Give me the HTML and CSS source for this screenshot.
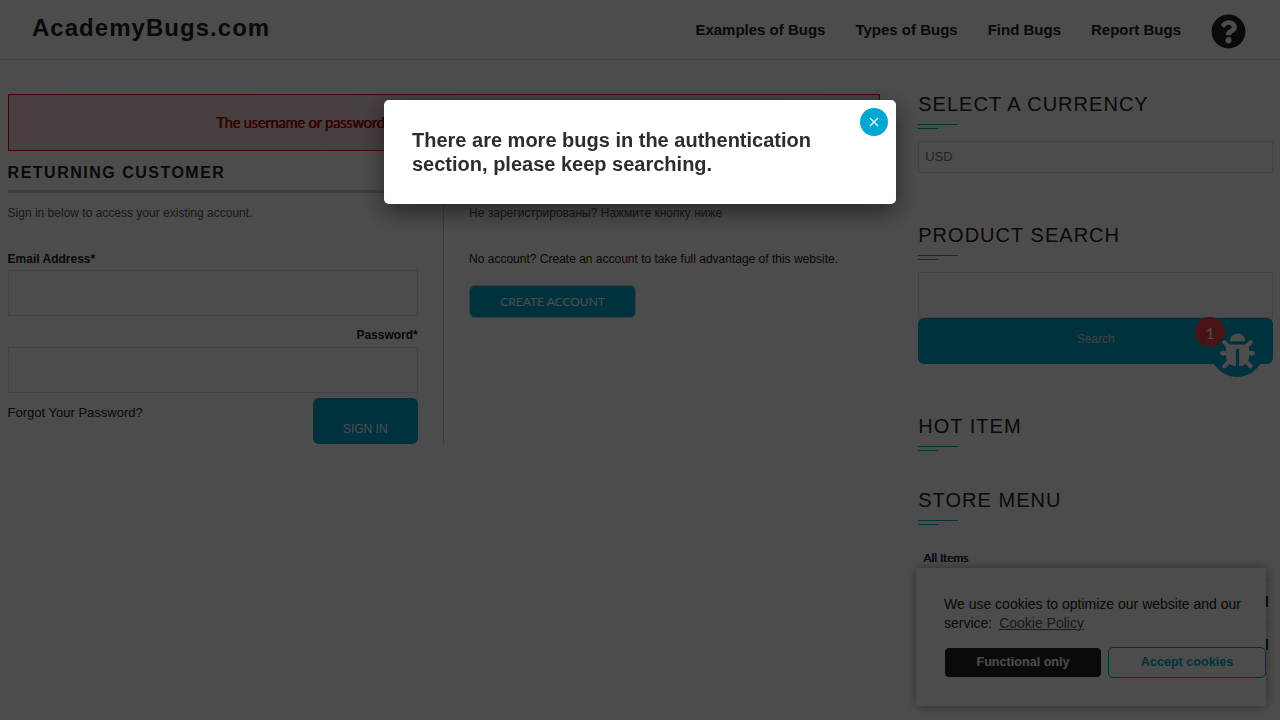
FILE: index.html
```html
<!DOCTYPE html>
<html lang="en">
<head>
<meta charset="utf-8">
<title>AcademyBugs.com</title>
<link rel="stylesheet" href="styles.css">
</head>
<body>
<header class="header">
  <a class="brand">AcademyBugs.com</a>
  <nav class="nav">
    <a>Examples of Bugs</a>
    <a>Types of Bugs</a>
    <a>Find Bugs</a>
    <a>Report Bugs</a>
    <svg class="help" viewBox="0 0 512 512"><path fill="currentColor" d="M504 256c0 136.997-111.043 248-248 248S8 392.997 8 256C8 119.083 119.043 8 256 8s248 111.083 248 248zM262.655 90c-54.497 0-89.255 22.957-116.549 63.758-3.536 5.286-2.353 12.415 2.715 16.258l34.699 26.31c5.205 3.947 12.621 3.008 16.665-2.122 17.864-22.658 30.113-35.797 57.303-35.797 20.429 0 45.698 13.148 45.698 32.958 0 14.976-12.363 22.667-32.534 33.976C247.128 238.528 216 254.941 216 296v4c0 6.627 5.373 12 12 12h56c6.627 0 12-5.373 12-12v-1.333c0-28.462 83.186-29.647 83.186-106.667 0-58.002-60.165-102-116.531-102zM256 338c-25.365 0-46 20.635-46 46 0 25.364 20.635 46 46 46s46-20.636 46-46c0-25.365-20.635-46-46-46z"/></svg>
  </nav>
</header>

<div class="page">
  <main class="main">
    <div class="error">The username or password</div>
    <div class="columns">
      <section class="column">
        <h2 class="column-title">RETURNING CUSTOMER</h2>
        <p class="subtitle">Sign in below to access your existing account.</p>
        <label class="label">Email Address*</label>
        <div class="field"></div>
        <label class="label label-right">Password*</label>
        <div class="field"></div>
        <div class="actions">
          <a class="forgot">Forgot Your Password?</a>
          <div class="sign-in">SIGN IN</div>
        </div>
      </section>
      <section class="column column-new">
        <h2 class="column-title"></h2>
        <p class="subtitle">Не зарегистрированы? Нажмите кнопку ниже</p>
        <p class="label note">No account? Create an account to take full advantage of this website.</p>
        <div class="create">CREATE ACCOUNT</div>
      </section>
    </div>
  </main>

  <aside class="sidebar">
    <section class="widget widget-currency">
      <h3 class="widget-title">SELECT A CURRENCY</h3>
      <div class="select">USD</div>
    </section>
    <section class="widget widget-search">
      <h3 class="widget-title">PRODUCT SEARCH</h3>
      <div class="search-field"></div>
      <div class="search-button">Search</div>
    </section>
    <section class="widget widget-hot">
      <h3 class="widget-title">HOT ITEM</h3>
    </section>
    <section class="widget">
      <h3 class="widget-title">STORE MENU</h3>
      <div class="menu">
        <div class="menu-row">All Items</div>
        <div class="menu-row"><span class="toggle"></span></div>
        <div class="menu-row"><span class="toggle"></span></div>
      </div>
    </section>
  </aside>
</div>

<div class="bug-widget">
  <svg class="bug" viewBox="0 0 512 512"><path fill="currentColor" d="M511.988 288.9c-.478 17.43-15.217 31.1-32.653 31.1H424v16c0 21.864-4.882 42.584-13.6 61.145l60.228 60.228c12.496 12.497 12.496 32.758 0 45.255-12.498 12.497-32.759 12.496-45.256 0l-54.736-54.736C345.886 467.965 314.351 480 280 480V236c0-6.627-5.373-12-12-12h-24c-6.627 0-12 5.373-12 12v244c-34.351 0-65.886-12.035-90.636-32.108l-54.736 54.736c-12.498 12.497-32.759 12.496-45.256 0-12.496-12.497-12.496-32.758 0-45.255l60.228-60.228C92.882 378.584 88 357.864 88 336v-16H32.666C15.23 320 .491 306.33.013 288.9-.484 270.816 14.028 256 32 256h56v-58.745l-46.628-46.628c-12.496-12.497-12.496-32.758 0-45.255 12.498-12.497 32.758-12.497 45.256 0L141.255 160h229.489l54.627-54.627c12.498-12.497 32.758-12.497 45.256 0 12.496 12.497 12.496 32.758 0 45.255L424 197.255V256h56c17.972 0 32.484 14.816 31.988 32.9zM257 0c-61.856 0-112 50.144-112 112h224C369 50.144 318.856 0 257 0z"/></svg>
  <span class="badge">1</span>
</div>

<div class="cookies">
  <p class="cookies-text">We use cookies to optimize our website and our service: <a class="policy">Cookie Policy</a></p>
  <div class="cookies-buttons">
    <div class="functional">Functional only</div>
    <div class="accept">Accept cookies</div>
  </div>
</div>

<div class="overlay">
  <div class="modal">
    <p class="message">There are more bugs in the authentication section, please keep searching.</p>
    <div class="close"><svg viewBox="0 0 10 10" class="cross"><path d="M1 1L9 9M9 1L1 9" stroke="currentColor" stroke-width="1.1" fill="none"/></svg></div>
  </div>
</div>
</body>
</html>
```

FILE: styles.css
```css
* { box-sizing: border-box; }
body {
  margin: 0;
  height: 720px;
  overflow: hidden;
  background: #fff;
  color: #222;
  font-family: "Liberation Sans", Arial, sans-serif;
  font-size: 12px;
}
h2, h3, p { margin: 0; }

.header {
  display: flex;
  justify-content: space-between;
  height: 60px;
  padding: 0 34px 0 32px;
  border-bottom: 1px solid #d5d5d5;
}
.brand {
  font-size: 24px;
  font-weight: 700;
  letter-spacing: 1.03px;
  line-height: 56px;
}
.nav {
  display: flex;
  gap: 30px;
  font-size: 15px;
  font-weight: 700;
  line-height: 60px;
}
.help { width: 35px; height: 35px; margin-top: 14px; }

.page {
  display: flex;
  justify-content: space-between;
  padding: 34px 6.8px 0 7.6px;
}
.main { width: 872.4px; }
.error {
  height: 57px;
  padding-left: 207.5px;
  border: 1px solid #e00;
  background: linear-gradient(90deg, #f3d3d3, #ead8d8);
  color: #b00000;
  font: 400 14.5px/55px Lato, sans-serif;
  letter-spacing: -.12px;
  text-shadow: .6px 0 #b00000;
}
.columns { display: flex; height: 293px; }
.column { width: 436.2px; padding-right: 25px; border-right: 1px solid #ccc; }
.column-new { padding: 0 0 0 25.3px; border-right: 0; }
.column-title {
  height: 42px;
  border-bottom: 3px solid #ccc;
  font-size: 16px;
  letter-spacing: 1.5px;
  line-height: 43px;
}
.subtitle { margin-top: 11px; color: #555; line-height: 18px; }
.label { display: block; margin-top: 28px; font-weight: 700; line-height: 18px; }
.label-right { margin-top: 10px; text-align: right; }
.note { font-weight: 400; }
.field { height: 46px; margin-top: 2px; border: 1px solid #dcdcdc; }
.label-right + .field { margin-top: 3px; }
.actions { display: flex; justify-content: space-between; margin-top: 5px; }
.forgot { font-size: 13px; line-height: 29px; }
.sign-in {
  width: 105px;
  height: 46px;
  padding-top: 16px;
  border-radius: 6px;
  background: #00a8cf;
  color: #fff;
  line-height: 30px;
  text-align: center;
}
.create {
  width: 167px;
  height: 33px;
  margin-top: 17px;
  border: 1px solid #ccc;
  border-radius: 6px;
  background: #00a8cf;
  color: #fff;
  font: 12px/32px Lato, sans-serif;
  text-align: center;
}

.sidebar { width: 355px; }
.widget-currency { height: 131px; }
.widget-search { height: 191px; }
.widget-hot { height: 74px; }
.widget-title {
  font-size: 20px;
  font-weight: 400;
  letter-spacing: 1.03px;
  line-height: 20px;
}
.widget-title::after {
  content: "";
  display: block;
  width: 40px;
  height: 5px;
  margin-top: 10px;
  background:
    linear-gradient(#00a8cf, #00a8cf) 0 0 / 40px 1px no-repeat,
    linear-gradient(#00a8cf, #00a8cf) 0 4px / 20px 1px no-repeat;
}
.select {
  height: 32px;
  margin-top: 12px;
  padding-left: 6px;
  border: 1px solid #ddd;
  color: #777;
  font-size: 13px;
  line-height: 30px;
}
.search-field { height: 46px; margin-top: 12px; border: 1px solid #dcdcdc; }
.search-button {
  height: 46px;
  border-radius: 6px;
  background: #00a8cf;
  color: #ddd;
  line-height: 42px;
  text-align: center;
}
.menu { margin-top: 12px; }
.menu-row {
  display: flex;
  justify-content: space-between;
  height: 43px;
  padding: 0 5px;
  border-bottom: 1px solid #eee;
  font: 400 12px/42px Lato, sans-serif;
  letter-spacing: -.1px;
  text-shadow: .6px 0 #222;
}
.toggle { width: 10px; height: 11px; margin: 16px 0 0 auto; border-right: 2px solid #333; }

.bug-widget {
  position: absolute;
  left: 1210px;
  top: 323px;
  display: flex;
  justify-content: center;
  width: 54px;
  height: 54px;
  border-radius: 50%;
  background: #00a8cf;
  color: #fff;
}
.bug { width: 35px; height: 36px; margin-top: 10px; }
.badge {
  position: absolute;
  left: -15px;
  top: -6px;
  width: 30px;
  height: 30px;
  border-radius: 50%;
  background: #f04048;
  font: 15px/33px Lato, sans-serif;
  text-align: center;
}

.cookies {
  position: absolute;
  left: 916px;
  top: 568px;
  width: 350px;
  height: 138px;
  padding: 27px 0 0 28px;
  background: #fff;
  box-shadow: 0 0 10px rgba(0, 0, 0, .4);
}
.cookies-text { width: 310px; font-size: 14px; line-height: 19px; }
.policy { margin-left: 3px; color: #555; text-decoration: underline; }
.cookies-buttons {
  display: flex;
  gap: 6px;
  margin-top: 14px;
  font-size: 12.6px;
  font-weight: 700;
  line-height: 28px;
  text-align: center;
}
.functional,
.accept { width: 158px; height: 31px; border: 1px solid #00a8cf; border-radius: 5px; color: #00a8cf; }
.functional { border-color: #fff; background: #222; color: #fff; }

.overlay { position: fixed; inset: 0; background: rgba(0, 0, 0, .7); }
.modal {
  width: 512px;
  height: 104px;
  margin: 100px auto 0;
  padding: 28px;
  display: flex;
  border-radius: 5px;
  background: #fff;
  box-shadow: 0 8px 25px rgba(0, 0, 0, .5);
}
.message { flex: 0 0 440px; color: #2d2d2d; font-size: 20px; font-weight: 700; line-height: 24px; }
.close {
  flex: 0 0 28px;
  height: 28px;
  margin: -20px 0 0 8px;
  border-radius: 50%;
  background: #00a8d1;
  color: #fff;
  display: flex;
  align-items: center;
  justify-content: center;
}
.cross { width: 10px; height: 10px; }
```
